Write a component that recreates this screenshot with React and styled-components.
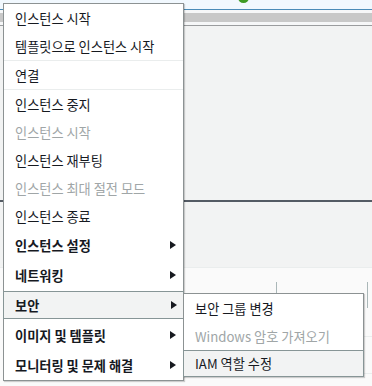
import styled, { createGlobalStyle } from "styled-components";

const GlobalStyle = createGlobalStyle`
  html, body {
    margin: 0;
    padding: 0;
    background: #fafafa;
  }
  body {
    font-family: "Noto Sans CJK KR", "Noto Sans", sans-serif;
    color: #16191f;
  }
`;

const Page = styled.div`
  position: relative;
  width: 372px;
  height: 386px;
  overflow: hidden;
  background: #fafafa;
`;

const TopBar = styled.div`
  position: relative;
  height: 9px;
  background: #f1f8fe;
  border-bottom: 1px solid #4a8bb8;
`;

const StatusDot = styled.span`
  position: absolute;
  left: 238px;
  top: -8px;
  width: 11px;
  height: 11px;
  border-radius: 50%;
  background: #3e9b25;
`;

const Toolbar = styled.div`
  padding: 3px 0;
  background: #f6f7f8;
  border-bottom: 1px solid #9a9c9e;
`;

const ToolbarFill = styled.div`
  height: 9px;
  background: #c8c8c8;
`;

const Content = styled.div`
  height: 174px;
  background: #f2f3f3;
  border-bottom: 2px solid #545b64;
`;

const Details = styled.div`
  height: 65px;
  background: #f2f3f3;
  border-bottom: 1px solid #eaeded;
`;

const TabRow = styled.div`
  display: flex;
  padding-top: 14px;
  padding-left: 188px;
`;

const Tab = styled.div`
  width: ${(p) => p.w}px;
  height: 26px;
  border-right: 1px solid #aab7b8;
`;

const TableLines = styled.div`
  margin-top: 14px;
  margin-left: 300px;
`;

const TableLine = styled.div`
  height: ${(p) => p.h}px;
  border-bottom: 1px solid #eaeded;
`;

const Menu = styled.div`
  position: absolute;
  left: ${(p) => p.x}px;
  top: ${(p) => p.y}px;
  width: ${(p) => p.w}px;
  box-sizing: border-box;
  background: #ffffff;
  border: 1px solid #8c9293;
  box-shadow: 1px 1px 1px rgba(0, 0, 0, 0.18);
  display: flex;
  flex-direction: column;
`;

const Item = styled.div`
  position: relative;
  height: ${(p) => (p.bold ? 30 : 28)}px;
  box-sizing: border-box;
  display: flex;
  align-items: center;
  justify-content: space-between;
  padding: 0 7px 0 11px;
  font-size: 13.2px;
  font-weight: ${(p) => (p.bold ? 700 : 400)};
  color: ${(p) => (p.disabled ? "#a0a6a7" : "#16191f")};
  white-space: nowrap;
  ${(p) =>
    p.active
      ? `background: #f2f3f3;
      border: 1px solid #879596;
      margin: 1px -1px;
      height: ${p.bold ? 28 : 27}px;
      padding-left: 11px;
      padding-right: 6px;`
      : ""}
`;

const SubItem = styled(Item)`
  height: 28px;
  ${(p) => (p.active ? "height: 27px; margin: 0 -1px -1px;" : "")}
`;

const Separator = styled.div`
  height: 1px;
  background: #eaeded;
`;

const Arrow = styled.span`
  width: 0;
  height: 0;
  border-top: 4px solid transparent;
  border-bottom: 4px solid transparent;
  border-left: 6px solid #16191f;
`;

const mainItems = [
  { label: "인스턴스 시작" },
  { label: "템플릿으로 인스턴스 시작" },
  { sep: true },
  { label: "연결" },
  { sep: true },
  { label: "인스턴스 중지" },
  { label: "인스턴스 시작", disabled: true },
  { label: "인스턴스 재부팅" },
  { label: "인스턴스 최대 절전 모드", disabled: true },
  { label: "인스턴스 종료" },
  { label: "인스턴스 설정", bold: true },
  { label: "네트워킹", bold: true },
  { label: "보안", bold: true, active: true },
  { label: "이미지 및 템플릿", bold: true },
  { label: "모니터링 및 문제 해결", bold: true },
];

const subItems = [
  { label: "보안 그룹 변경" },
  { label: "Windows 암호 가져오기", disabled: true },
  { label: "IAM 역할 수정", active: true },
];

export default function App() {
  return (
    <Page>
      <GlobalStyle />
      <TopBar>
        <StatusDot />
      </TopBar>
      <Toolbar>
        <ToolbarFill />
      </Toolbar>
      <Content />
      <Details />
      <TabRow>
        <Tab w={88} />
        <Tab w={90} />
      </TabRow>
      <TableLines>
        <TableLine h={14} />
        <TableLine h={36} />
      </TableLines>

      <Menu x={3} y={3} w={181}>
        {mainItems.map((it, i) =>
          it.sep ? (
            <Separator key={i} />
          ) : (
            <Item
              key={i}
              bold={it.bold}
              disabled={it.disabled}
              active={it.active}
            >
              {it.label}
              {it.bold && <Arrow />}
            </Item>
          )
        )}
      </Menu>

      <Menu x={183} y={293} w={181}>
        {subItems.map((it, i) => (
          <SubItem key={i} disabled={it.disabled} active={it.active}>
            {it.label}
          </SubItem>
        ))}
      </Menu>
    </Page>
  );
}
